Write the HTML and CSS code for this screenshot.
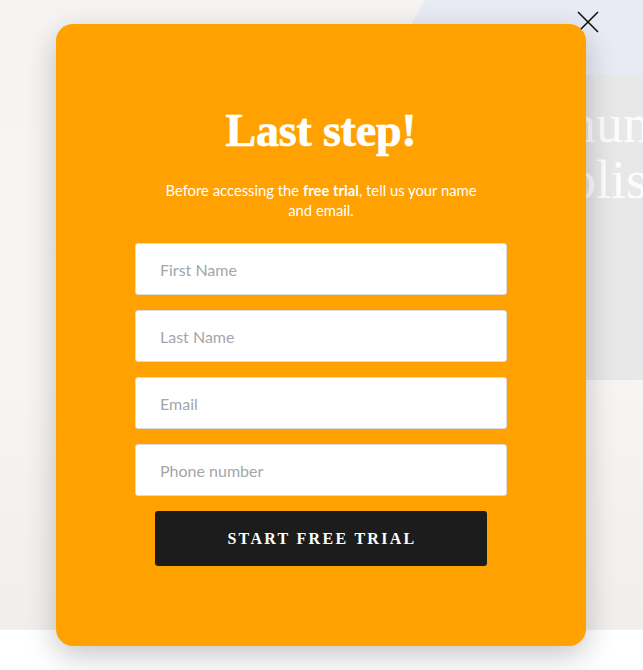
FILE: index.html
```html
<!DOCTYPE html>
<html lang="en">
<head>
<meta charset="utf-8">
<title>Last step</title>
<link rel="stylesheet" href="styles.css">
</head>
<body>
<div class="page">
  <section class="hero">
    <div class="hero-left">
      <div class="sky"></div>
    </div>
    <div class="hero-right">
      <div class="hero-top"></div>
      <div class="hero-panel">
        <p class="hero-text">hun<br>olis</p>
      </div>
    </div>
  </section>
  <section class="below"></section>
</div>

<div class="overlay">
  <button class="close" aria-label="Close">
    <svg width="22" height="22" viewBox="0 0 22 22"><path d="M1 1 L21 21 M21 1 L1 21" stroke="#111" stroke-width="1.6" fill="none"/></svg>
  </button>
  <div class="modal">
    <h1 class="title">Last step!</h1>
    <p class="lead">Before accessing the <strong>free trial</strong>, tell us your name and email.</p>
    <form class="form">
      <input class="field" type="text" placeholder="First Name">
      <input class="field" type="text" placeholder="Last Name">
      <input class="field" type="email" placeholder="Email">
      <input class="field" type="tel" placeholder="Phone number">
      <button class="submit" type="button">START FREE TRIAL</button>
    </form>
  </div>
</div>
</body>
</html>
```

FILE: styles.css
```css
* { box-sizing: border-box; }
html, body { margin: 0; padding: 0; }
body {
  width: 643px;
  height: 670px;
  overflow: hidden;
  background: #ffffff;
  font-family: "Lato", "Liberation Sans", sans-serif;
}
.page { display: flex; flex-direction: column; }
.hero {
  height: 630px;
  display: flex;
  background: linear-gradient(180deg, #f5f4f3 0%, #f6f5f4 60%, #f1eeec 100%);
}
.hero-left { flex: 1; position: relative; overflow: hidden; }
.sky {
  position: absolute;
  right: 0; top: 0;
  width: 190px; height: 75px;
  background: #e8ebf3;
  clip-path: polygon(22% 0, 100% 0, 100% 100%, 0 100%);
}
.hero-right {
  width: 70px;
  display: flex;
  flex-direction: column;
}
.hero-top { height: 75px; background: #e8ebf3; }
.hero-panel {
  height: 305px;
  background: linear-gradient(90deg, #dcdcdd 0px, #e7e7e8 20px, #e8e8e8 100%);
  overflow: hidden;
}
.hero-text {
  margin: 21px 0 0 -4px;
  font-family: "Liberation Serif", serif;
  font-size: 54px;
  line-height: 56px;
  color: rgba(255,255,255,0.85);
  white-space: nowrap;
}
.below { height: 40px; background: #ffffff; }

.overlay {
  position: absolute;
  left: 0; top: 0;
  width: 643px; height: 670px;
}
.close {
  position: absolute;
  left: 577px; top: 11px;
  width: 22px; height: 22px;
  padding: 0; border: 0; background: none;
  display: flex;
}
.modal {
  position: absolute;
  left: 56px; top: 24px;
  width: 530px; height: 622px;
  background: #ffa100;
  border-radius: 17px;
  box-shadow: 0 10px 30px rgba(0,0,0,0.22);
  padding: 80px 79px 80px;
  display: flex;
  flex-direction: column;
  align-items: center;
  color: #fff;
}
.title {
  margin: 0;
  font-family: "Liberation Serif", serif;
  font-weight: 700;
  font-size: 46px;
  line-height: 54px;
  letter-spacing: -0.2px;
  -webkit-text-stroke: 0.7px #fff;
}
.lead {
  margin: 22px 0 0;
  width: 330px;
  text-align: center;
  font-size: 14.8px;
  line-height: 20px;
}
.lead strong { font-weight: 700; }
.form {
  margin-top: 23px;
  width: 100%;
  display: flex;
  flex-direction: column;
  gap: 15px;
  align-items: center;
}
.field {
  width: 100%;
  height: 52px;
  border: 1px solid #dcdcdc;
  border-radius: 3px;
  background: #fff;
  padding: 0 24px;
  font-family: "Lato", "Liberation Sans", sans-serif;
  font-size: 16px;
  color: #333;
  outline: none;
}
.field::placeholder { color: #a3a6ab; }
.submit {
  width: 332px;
  height: 55px;
  border: 0;
  border-radius: 3px;
  background: #1c1c1c;
  color: #fff;
  font-family: "Liberation Serif", serif;
  font-weight: 700;
  font-size: 16px;
  letter-spacing: 2.3px;
  text-indent: 2px;
}
```
